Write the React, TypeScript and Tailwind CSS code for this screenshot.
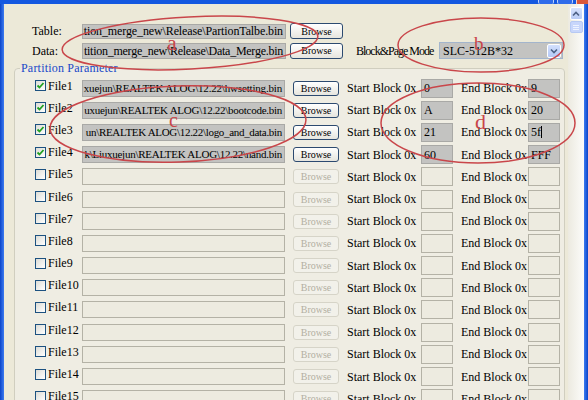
import React from "react";

type FileRow = { path: string; start: string; end: string; track: string; cursor?: boolean };

const filled: FileRow[] = [
  { path: "xuejun\\REALTEK ALOG\\12.22\\hwsetting.bin", start: "0", end: "9", track: "tracking-[-0.18px]" },
  { path: "uxuejun\\REALTEK ALOG\\12.22\\bootcode.bin", start: "A", end: "20", track: "tracking-[-0.27px]" },
  { path: "un\\REALTEK ALOG\\12.22\\logo_and_data.bin", start: "21", end: "5f", track: "tracking-[-0.31px]", cursor: true },
  { path: "k\\Liuxuejun\\REALTEK ALOG\\12.22\\nand.bin", start: "60", end: "FFF", track: "tracking-[-0.26px]" },
];

const rows = Array.from({ length: 16 }, (_, i) => filled[i] ?? null);

function Browse({ enabled, className = "" }: { enabled: boolean; className?: string }) {
  return enabled ? (
    <div
      className={`flex items-center justify-center rounded-[3px] border border-[#2C4A70] bg-gradient-to-b from-white to-[#E6E5DE] text-[10px] text-black ${className}`}
    >
      Browse
    </div>
  ) : (
    <div
      className={`flex items-center justify-center rounded-[3px] border border-[#D6D4C8] bg-[#F2F1EA] text-[10px] text-[#B3B0A2] ${className}`}
    >
      Browse
    </div>
  );
}

function Field({ value, filled, className = "", end }: { value?: string; filled: boolean; className?: string; end?: boolean }) {
  return (
    <div
      className={`flex items-center overflow-hidden whitespace-nowrap border ${
        filled ? "border-[#A9A9A6] bg-[#C3C3C1]" : "border-[#B4B2A6] bg-[#EDEBE0]"
      } ${end ? "justify-end pr-[2px]" : "pl-[2px]"} ${className}`}
    >
      {value}
    </div>
  );
}

function Checkbox({ checked }: { checked: boolean }) {
  return (
    <div className="flex h-[11px] w-[11px] items-center justify-center border border-[#1C5180] bg-gradient-to-br from-[#DCDCD6] to-white">
      {checked && (
        <svg width="9" height="9" viewBox="0 0 9 9">
          <polyline points="1.5,4.5 3.5,6.5 7.5,2" fill="none" stroke="#21A121" strokeWidth="1.8" />
        </svg>
      )}
    </div>
  );
}

export default function App() {
  return (
    <div className="relative flex h-[400px] w-[588px] flex-col overflow-hidden bg-[#ECE9D8] font-['Liberation_Serif',serif] text-[12px] text-black">
      {/* title bar bottom */}
      <div className="flex h-[4px] justify-end bg-[#1458E0]">
        <div className="mr-[3px] w-[16px] rounded-b-[2px] border-x border-white/70 bg-[#2F6BEA]" />
        <div className="mr-[3px] w-[16px] rounded-b-[2px] border-x border-white/70 bg-[#2F6BEA]" />
        <div className="w-[12px] border-l border-white/70 bg-[#D9583B]" />
      </div>

      <div className="flex min-h-0 flex-1">
        <div className="w-[4px] bg-gradient-to-r from-[#0A44C9] to-[#3C7BF0]" />

        <main className="min-w-0 flex-1 pt-[19px]">
          {/* Table row */}
          <div className="flex h-[16px] items-center pl-[28px]">
            <span className="w-[50px]">Table:</span>
            <Field
              value="tion_merge_new\Release\PartionTalbe.bin"
              filled
              end
              className="h-[15px] w-[204px] tracking-[-0.12px]"
            />
            <Browse enabled className="ml-[4px] h-[16px] w-[53px]" />
          </div>

          {/* Data row */}
          <div className="mt-[3px] flex h-[17px] items-center pl-[28px]">
            <span className="w-[50px]">Data:</span>
            <Field
              value="tition_merge_new\Release\Data_Merge.bin"
              filled
              end
              className="h-[16px] w-[204px] tracking-[-0.26px]"
            />
            <Browse enabled className="ml-[4px] h-[16px] w-[53px]" />
            <span className="ml-[13px] w-[83px] whitespace-nowrap tracking-[-1px]">Block&amp;Page Mode</span>
            <div className="flex h-[17px] w-[124px] items-center border border-[#A3B5CC] bg-[#C3C3C1] pl-[3px]">
              <span className="flex-1">SLC-512B*32</span>
              <div className="mr-px flex h-[14px] w-[14px] items-center justify-center rounded-[2px] border border-white bg-gradient-to-b from-[#D3E0FD] to-[#B4C8F6]">
                <svg width="8" height="6" viewBox="0 0 8 6">
                  <polyline points="1,1.5 4,4.5 7,1.5" fill="none" stroke="#4D6185" strokeWidth="1.6" />
                </svg>
              </div>
            </div>
          </div>

          {/* Partition group */}
          <fieldset className="ml-[10px] mt-[2px] w-[551px] rounded-[4px] border border-[#D0CEBF] bg-[#EFEDE3]">
            <legend className="ml-[5px] px-px leading-[14px] tracking-[0.2px] text-[#1848C8]">Partition Parameter</legend>
            <div className="flex flex-col pl-[20px] pt-[2px]">
              {rows.map((r, i) => (
                <div key={i} className="flex h-[22.2px] items-center">
                  <div className="mb-[5px] flex items-center">
                    <Checkbox checked={!!r} />
                    <span className="ml-[2px] w-[34px]">File{i + 1}</span>
                  </div>
                  <Field
                    value={r?.path}
                    filled={!!r}
                    end
                    className={`h-[17px] w-[203px] text-[11px] ${r?.track ?? ""}`}
                  />
                  <Browse enabled={!!r} className="ml-[8px] h-[15px] w-[46px]" />
                  <span className="ml-[8px] w-[74px]">Start Block 0x</span>
                  <Field value={r?.start} filled={!!r} className="h-[19px] w-[32px]" />
                  <span className="ml-[8px] w-[67px]">End Block 0x</span>
                  <div
                    className={`flex h-[19px] w-[32px] items-center border pl-[2px] ${
                      r ? "border-[#A9A9A6] bg-[#C3C3C1]" : "border-[#B4B2A6] bg-[#EDEBE0]"
                    }`}
                  >
                    {r?.end}
                    {r?.cursor && <span className="h-[12px] w-px bg-black" />}
                  </div>
                </div>
              ))}
            </div>
          </fieldset>
        </main>

        {/* scrollbar */}
        <div className="flex w-[16px] flex-col items-center bg-gradient-to-r from-[#ECEAE0] to-[#FCFCFA] pt-[3px]">
          <div className="flex h-[13px] w-[13px] items-center justify-center rounded-[2px] border border-white bg-gradient-to-b from-[#D6E2FD] to-[#B9CCF6]">
            <svg width="8" height="6" viewBox="0 0 8 6">
              <polyline points="1,4.5 4,1.5 7,4.5" fill="none" stroke="#4D6185" strokeWidth="1.6" />
            </svg>
          </div>
          <div className="mt-px flex h-[12px] w-[13px] flex-col items-center justify-center gap-[1px] rounded-[2px] border border-[#B7C9F3] bg-[#C8D6FB]">
            <div className="h-px w-[6px] bg-[#EEF3FF]" />
            <div className="h-px w-[6px] bg-[#EEF3FF]" />
            <div className="h-px w-[6px] bg-[#EEF3FF]" />
          </div>
        </div>
        <div className="w-[4px] bg-gradient-to-r from-[#3C7BF0] to-[#0A44C9]" />
      </div>

      {/* red annotation marks */}
      <svg className="pointer-events-none absolute inset-0" width="588" height="400" viewBox="0 0 588 400">
        <g fill="none" stroke="#C9464A" strokeWidth="1.5">
          <ellipse cx="190" cy="43" rx="128" ry="26" transform="rotate(-3 190 43)" />
          <ellipse cx="481" cy="45" rx="83" ry="27" />
          <ellipse cx="178" cy="124" rx="128" ry="38" transform="rotate(-2 178 124)" />
          <ellipse cx="478" cy="123" rx="97" ry="40" />
        </g>
        <g fill="#C9464A" fontFamily="Liberation Serif, serif">
          <text x="167" y="50" fontSize="22">a</text>
          <text x="474" y="50" fontSize="19">b</text>
          <text x="169" y="127" fontSize="20">c</text>
          <text x="475" y="129" fontSize="22">d</text>
        </g>
      </svg>
    </div>
  );
}
